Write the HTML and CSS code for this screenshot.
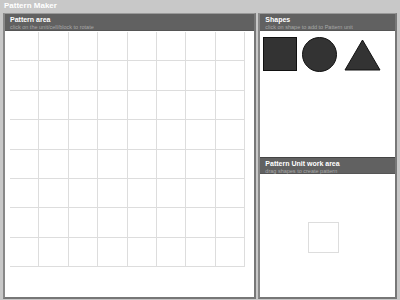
FILE: index.html
```html
<!DOCTYPE html>
<html lang="en">
<head>
  <meta charset="UTF-8">
  <title>Pattern Maker</title>
  <link rel="stylesheet" href="styles.css">
</head>
<body>
  <div class="app-title">Pattern Maker</div>
  <div class="workspace">
    <section class="panel pattern">
      <div class="panel-head">
        <h2>Pattern area</h2>
        <p>click on the unit/cell/block to rotate</p>
      </div>
      <div class="pattern-grid">
        <div></div><div></div><div></div><div></div><div></div><div></div><div></div><div></div>
        <div></div><div></div><div></div><div></div><div></div><div></div><div></div><div></div>
        <div></div><div></div><div></div><div></div><div></div><div></div><div></div><div></div>
        <div></div><div></div><div></div><div></div><div></div><div></div><div></div><div></div>
        <div></div><div></div><div></div><div></div><div></div><div></div><div></div><div></div>
        <div></div><div></div><div></div><div></div><div></div><div></div><div></div><div></div>
        <div></div><div></div><div></div><div></div><div></div><div></div><div></div><div></div>
        <div></div><div></div><div></div><div></div><div></div><div></div><div></div><div></div>
      </div>
    </section>

    <section class="panel side">
      <div class="panel-head">
        <h2>Shapes</h2>
        <p>click on shape to add to Pattern unit</p>
      </div>
      <div class="shapes">
        <svg width="34" height="34" viewBox="0 0 34 34"><rect x="0.5" y="0.5" width="33" height="33" fill="#333" stroke="#111"/></svg>
        <svg width="35" height="35" viewBox="0 0 35 35"><circle cx="17.5" cy="17.5" r="17" fill="#333" stroke="#111"/></svg>
        <svg width="37" height="32" viewBox="0 0 37 32"><polygon points="18.5,1 36,31 1,31" fill="#333" stroke="#111"/></svg>
      </div>

      <div class="panel-head unit-head">
        <h2>Pattern Unit work area</h2>
        <p>drag shapes to create pattern</p>
      </div>
      <div class="unit-area">
        <div class="unit-cell"></div>
      </div>
    </section>
  </div>
</body>
</html>
```

FILE: styles.css
```css
* {
  box-sizing: border-box;
}
body, h2, p {
  margin: 0;
  padding: 0;
}
body {
  font-family: "Liberation Sans", Arial, sans-serif;
  background: #c8c8c8;
  width: 400px;
  height: 300px;
  overflow: hidden;
}
.app-title {
  height: 12px;
  padding: 1px 4px 0;
  color: #fff;
  font-size: 8px;
  font-weight: bold;
  line-height: 10px;
}
.workspace {
  display: flex;
  gap: 2px;
  padding: 1px 3px 0 3px;
  height: 287px;
}
.panel {
  background: #fff;
  border: 1px solid #999;
  border-left: 2px solid #888;
  border-bottom: 2px solid #777;
  border-right: 2px solid #777;
  display: flex;
  flex-direction: column;
}
.pattern {
  width: 254px;
}
.side {
  width: 139px;
}
.panel-head {
  background: #616161;
  height: 17px;
  padding: 1px 5px 0;
  border-bottom: 1px solid #555;
}
.panel-head h2 {
  color: #fff;
  font-size: 7px;
  font-weight: bold;
  line-height: 9px;
}
.panel-head p {
  color: #a8a8a8;
  font-size: 5.5px;
  line-height: 7px;
}
.pattern-grid {
  display: grid;
  grid-template-columns: repeat(8, 29.4px);
  grid-auto-rows: 29.4px;
  margin: 1px 0 0 5px;
}
.pattern-grid div {
  border-right: 1px solid #ddd;
  border-bottom: 1px solid #ddd;
}
.shapes {
  height: 126px;
  display: flex;
  align-items: flex-start;
  gap: 5px;
  padding: 6px 0 0 3px;
}
.shapes svg {
  display: block;
}
.shapes svg:last-child {
  margin-top: 2px;
  margin-left: 2px;
}
.unit-head {
  border-top: 1px solid #444;
}
.unit-area {
  flex: 1;
  padding: 48px 0 0 48px;
}
.unit-cell {
  width: 31px;
  height: 31px;
  border: 1px solid #ddd;
}
```
